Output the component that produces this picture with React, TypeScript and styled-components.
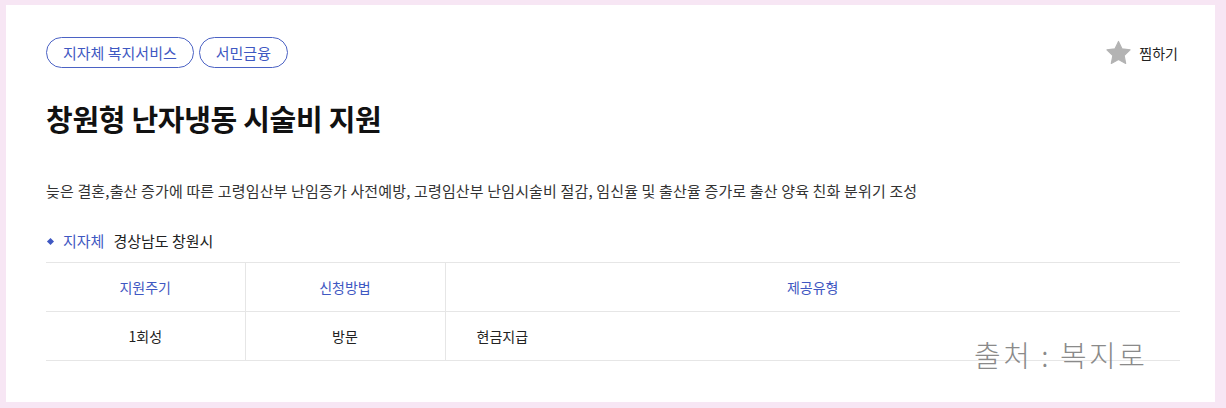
import React from 'react';
import styled, { createGlobalStyle } from 'styled-components';

const GlobalStyle = createGlobalStyle`
  html, body {
    margin: 0;
    padding: 0;
    background: #f7e6f4;
  }
  body {
    font-family: 'Noto Sans CJK KR', 'Noto Sans', sans-serif;
    color: #222;
  }
`;

const Card = styled.div`
  position: relative;
  box-sizing: border-box;
  margin: 5px 11px 0 6px;
  height: 397px;
  background: #fff;
  padding: 32px 35px 0 40px;
`;

const TopBar = styled.div`
  display: flex;
  align-items: center;
  justify-content: space-between;
`;

const Tags = styled.div`
  display: flex;
  gap: 5px;
`;

const Tag = styled.span`
  box-sizing: border-box;
  height: 31px;
  padding: 0 16px;
  display: inline-flex;
  align-items: center;
  border: 1px solid #4b62c4;
  border-radius: 16px;
  color: #3f58c2;
  font-size: 15px;
`;

const LikeButton = styled.button`
  display: flex;
  align-items: center;
  gap: 7px;
  border: 0;
  background: none;
  padding: 0;
  margin-right: 2px;
  font-family: inherit;
  font-size: 14px;
  color: #222;
  cursor: pointer;
`;

const Title = styled.h1`
  margin: 30px 0 0;
  font-size: 29px;
  line-height: 40px;
  font-weight: 700;
  color: #111;
  letter-spacing: -0.3px;
`;

const Description = styled.p`
  margin: 42px 0 0;
  font-size: 15px;
  line-height: 22px;
  color: #333;
  letter-spacing: 0.15px;
`;

const InfoRow = styled.div`
  margin-top: 28px;
  display: flex;
  align-items: center;
  font-size: 15px;
  line-height: 22px;
`;

const Bullet = styled.span`
  width: 5px;
  height: 5px;
  margin: 0 10px 0 2px;
  background: #3f58c2;
  transform: rotate(45deg);
`;

const InfoLabel = styled.span`
  color: #3f58c2;
  margin-right: 9px;
`;

const InfoValue = styled.span`
  color: #222;
`;

const Table = styled.table`
  margin-top: 10px;
  width: 100%;
  border-collapse: collapse;
  font-size: 14px;
`;

const Cell = styled.td<{ $head?: boolean; $left?: boolean }>`
  height: 48px;
  padding: 0;
  border-top: 1px solid #e6e6e6;
  border-bottom: 1px solid #e6e6e6;
  border-left: 1px solid #e6e6e6;
  text-align: ${(p) => (p.$left ? 'left' : 'center')};
  padding-left: ${(p) => (p.$left ? '31px' : '0')};
  color: ${(p) => (p.$head ? '#3f58c2' : '#222')};
  font-weight: 400;
  &:first-child {
    border-left: 0;
  }
`;

const Source = styled.div`
  position: absolute;
  left: 968px;
  top: 328px;
  font-size: 29px;
  font-weight: 300;
  color: #8a8a8a;
  letter-spacing: 2.5px;
`;

const StarIcon = () => (
  <svg width="27" height="26" viewBox="0 0 24 23">
    <path
      d="M12 1.2l3.1 6.6 7.2.9-5.3 5 1.4 7.1L12 17.3l-6.4 3.5L7 13.7l-5.3-5 7.2-.9z"
      fill="#b3b3b3"
      stroke="#b3b3b3"
      strokeWidth="1"
      strokeLinejoin="round"
    />
  </svg>
);

export default function App() {
  return (
    <>
      <GlobalStyle />
      <Card>
        <TopBar>
          <Tags>
            <Tag>지자체 복지서비스</Tag>
            <Tag>서민금융</Tag>
          </Tags>
          <LikeButton>
            <StarIcon />
            찜하기
          </LikeButton>
        </TopBar>
        <Title>창원형 난자냉동 시술비 지원</Title>
        <Description>
          늦은 결혼,출산 증가에 따른 고령임산부 난임증가 사전예방, 고령임산부 난임시술비 절감, 임신율 및 출산율 증가로 출산 양육 친화 분위기 조성
        </Description>
        <InfoRow>
          <Bullet />
          <InfoLabel>지자체</InfoLabel>
          <InfoValue>경상남도 창원시</InfoValue>
        </InfoRow>
        <Table>
          <colgroup>
            <col style={{ width: 199 }} />
            <col style={{ width: 200 }} />
            <col />
          </colgroup>
          <tbody>
            <tr>
              <Cell as="th" $head>지원주기</Cell>
              <Cell as="th" $head>신청방법</Cell>
              <Cell as="th" $head>제공유형</Cell>
            </tr>
            <tr>
              <Cell>1회성</Cell>
              <Cell>방문</Cell>
              <Cell $left>현금지급</Cell>
            </tr>
          </tbody>
        </Table>
        <Source>출처 : 복지로</Source>
      </Card>
    </>
  );
}
